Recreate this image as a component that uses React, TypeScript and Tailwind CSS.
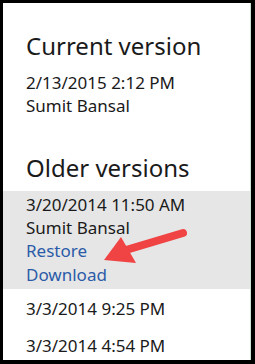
export default function App() {
  const font = { fontFamily: '"Segoe UI", "Noto Sans", sans-serif' };
  return (
    <div className="relative w-[255px] h-[364px] bg-black pt-[3px] pl-[3px] pr-[4px] pb-[4px]" style={font}>
      <div className="h-full bg-white border-r border-[#cde3d4] text-[#1a1a1a] overflow-hidden">
        <div className="pl-[23px] pt-[27px] text-[24px] leading-[32px]">Current version</div>
        <div className="pl-[23px] mt-[9px] text-[17px] leading-[23px]">
          <div>2/13/2015 2:12 PM</div>
          <div>Sumit Bansal</div>
        </div>
        <div className="pl-[23px] mt-[35px] text-[24px] leading-[32px]">Older versions</div>
        <div className="mt-[7px] bg-[#e6e6e6] pl-[23px] pt-[2px] pb-[3px] text-[17px] leading-[23px]">
          <div>3/20/2014 11:50 AM</div>
          <div>Sumit Bansal</div>
          <div className="text-[#2b5ba8]">Restore</div>
          <div className="text-[#2b5ba8] mt-[1px]">Download</div>
        </div>
        <div className="pl-[23px] mt-[8px] text-[17px] leading-[23px]">3/3/2014 9:25 PM</div>
        <div className="pl-[23px] mt-[14px] text-[17px] leading-[23px]">3/3/2014 4:54 PM</div>
      </div>
      <svg className="absolute inset-0" width="255" height="364" viewBox="0 0 255 364">
        <line x1="183" y1="233" x2="126" y2="250" stroke="#f04343" strokeWidth="8" strokeLinecap="round" />
        <polygon points="104,260 121,237 136,263" fill="#f04343" />
      </svg>
    </div>
  );
}
